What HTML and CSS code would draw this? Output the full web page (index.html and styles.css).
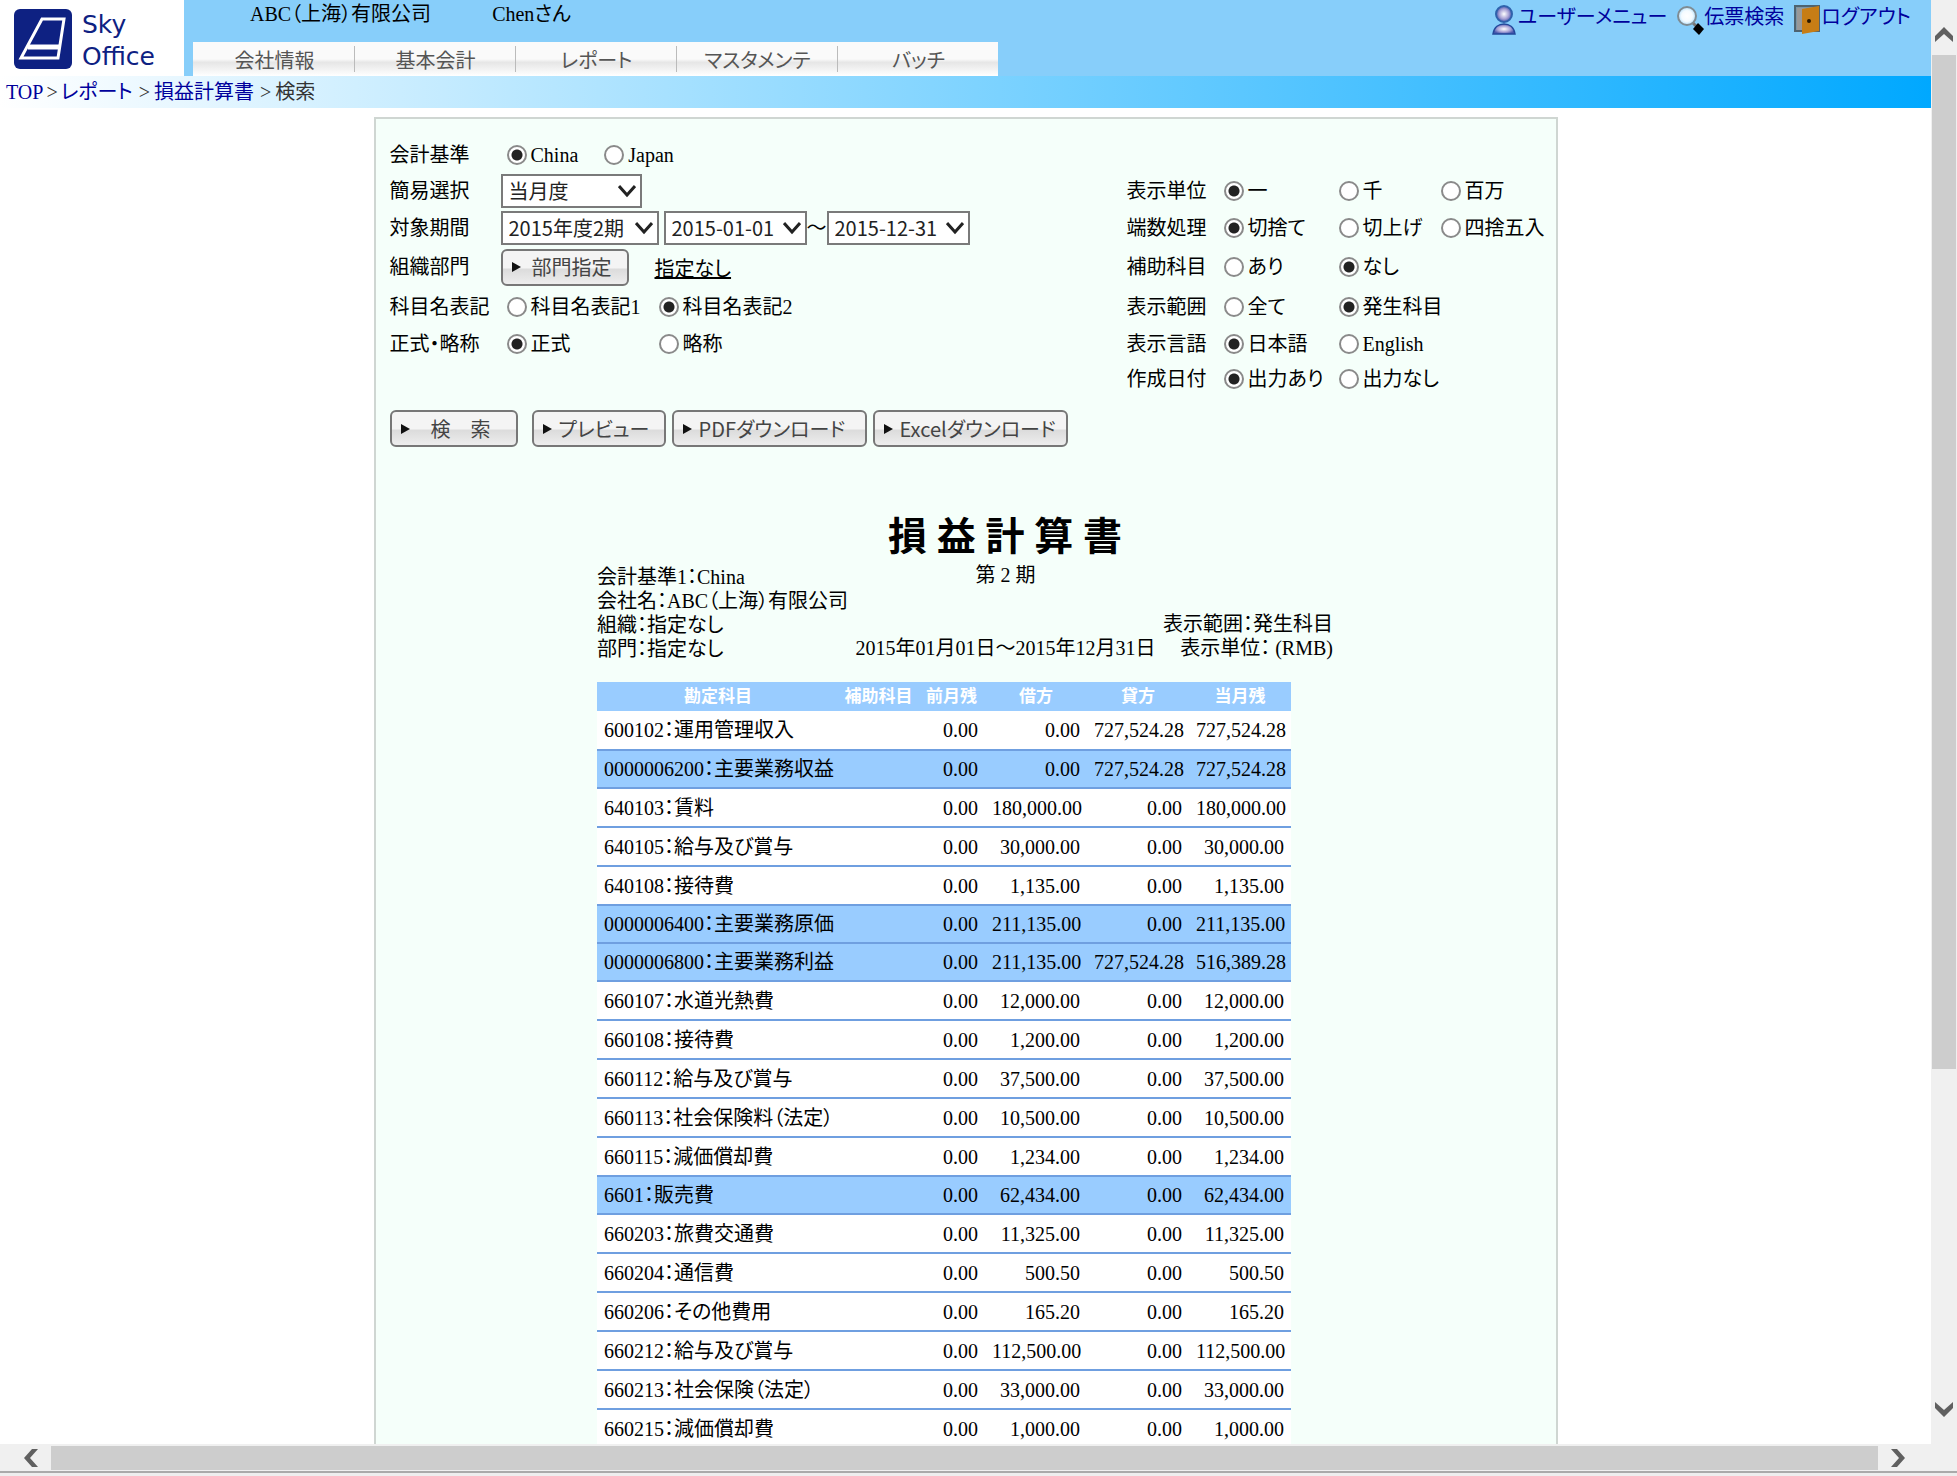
FILE: index.html
```html
<!DOCTYPE html>
<html lang="ja">
<head>
<meta charset="utf-8">
<title>損益計算書</title>
<link rel="stylesheet" href="styles.css">
</head>
<body>
<div class="window">
  <div class="page">
    <header class="header">
      <a class="logo" href="#">
        <svg class="logo-mark" viewBox="0 0 58 60" aria-hidden="true">
          <rect width="58" height="60" rx="6" fill="#0e2182"/>
          <path d="M28 10H50L44 49H7Z" fill="none" stroke="#fff" stroke-width="3"/>
          <path d="M14 38H46" fill="none" stroke="#fff" stroke-width="5"/>
        </svg>
        <span class="logo-text">Sky<br>Office</span>
      </a>
      <div class="header-main">
        <div class="account"><span>ABC（上海）有限公司</span><span>Chenさん</span></div>
        <nav class="tabs">
          <a href="#">会社情報</a>
          <a href="#">基本会計</a>
          <a href="#">レポート</a>
          <a href="#">マスタメンテ</a>
          <a href="#">バッチ</a>
        </nav>
      </div>
      <div class="user-links">
        <a href="#">
          <svg class="icon" viewBox="0 0 26 30" aria-hidden="true">
            <defs>
              <radialGradient id="orb"><stop offset="0" stop-color="#fff"/><stop offset="0.6" stop-color="#a9a3d6"/><stop offset="1" stop-color="#4a58ad"/></radialGradient>
              <radialGradient id="lens"><stop offset="0" stop-color="#fff"/><stop offset="0.6" stop-color="#f4fbff"/><stop offset="1" stop-color="#b5e0fb"/></radialGradient>
            </defs>
            <circle cx="13" cy="9" r="8" fill="url(#orb)" stroke="#2f62ac" stroke-width="2"/>
            <path d="M2 29C3 22 8 19 13 19S23 22 24 29Z" fill="url(#orb)" stroke="#24489a" stroke-width="1.5"/>
          </svg>ユーザーメニュー</a>
        <a href="#">
          <svg class="icon" viewBox="0 0 26 30" aria-hidden="true">
            <path d="M16 18L20 22" stroke="#777" stroke-width="3"/>
            <circle cx="10" cy="11" r="9" fill="url(#lens)" stroke="#7f8c93" stroke-width="2"/>
            <path d="M21 18L27 24L22 30L16 24Z" fill="#000"/>
          </svg>伝票検索</a>
        <a href="#">
          <svg class="icon" viewBox="0 0 26 30" aria-hidden="true">
            <path d="M1 1H25V26H1Z" fill="#7d96a5" stroke="#4e6370" stroke-width="2"/>
            <path d="M3 3H12V25H3Z" fill="#999"/>
            <path d="M8 4L25 1V26L8 29Z" fill="#c77d15"/>
            <circle cx="15" cy="16" r="2" fill="#2a1800"/>
          </svg>ログアウト</a>
      </div>
    </header>
    <nav class="breadcrumb">
      <a href="#">TOP</a><span>&gt;</span><a href="#">レポート</a><span class="wide">&gt;</span><a href="#">損益計算書</a><span class="wide">&gt;</span><span class="here">検索</span>
    </nav>

    <main class="panel">
      <form class="conditions">
        <div class="fields fields-left">
          <span class="name">会計基準</span>
          <div class="options">
            <label><input type="radio" name="standard" checked>China</label>
            <label><input type="radio" name="standard">Japan</label>
          </div>
          <label class="name" for="quick">簡易選択</label>
          <div class="controls"><select id="quick" class="w-quick"><option>当月度</option></select></div>
          <label class="name" for="term">対象期間</label>
          <div class="controls">
            <select id="term" class="w-term"><option>2015年度2期</option></select>
            <select class="w-date" aria-label="開始日"><option>2015-01-01</option></select>
            <span class="tilde">～</span>
            <select class="w-date" aria-label="終了日"><option>2015-12-31</option></select>
          </div>
          <span class="name">組織部門</span>
          <div class="controls dept">
            <button type="button" class="btn w-small">部門指定</button>
            <a class="unset" href="#">指定なし</a>
          </div>
          <span class="name">科目名表記</span>
          <div class="options pair">
            <label><input type="radio" name="notation">科目名表記1</label>
            <label><input type="radio" name="notation" checked>科目名表記2</label>
          </div>
          <span class="name">正式・略称</span>
          <div class="options pair">
            <label><input type="radio" name="form" checked>正式</label>
            <label><input type="radio" name="form">略称</label>
          </div>
        </div>
        <div class="fields fields-right">
          <span class="name">表示単位</span>
          <div class="triple">
            <label><input type="radio" name="unit" checked>一</label>
            <label><input type="radio" name="unit">千</label>
            <label><input type="radio" name="unit">百万</label>
          </div>
          <span class="name">端数処理</span>
          <div class="triple">
            <label><input type="radio" name="round" checked>切捨て</label>
            <label><input type="radio" name="round">切上げ</label>
            <label><input type="radio" name="round">四捨五入</label>
          </div>
          <span class="name">補助科目</span>
          <div class="triple">
            <label><input type="radio" name="sub">あり</label>
            <label><input type="radio" name="sub" checked>なし</label>
          </div>
          <span class="name">表示範囲</span>
          <div class="triple">
            <label><input type="radio" name="range">全て</label>
            <label><input type="radio" name="range" checked>発生科目</label>
          </div>
          <span class="name">表示言語</span>
          <div class="triple">
            <label><input type="radio" name="lang" checked>日本語</label>
            <label><input type="radio" name="lang">English</label>
          </div>
          <span class="name">作成日付</span>
          <div class="triple">
            <label><input type="radio" name="date" checked>出力あり</label>
            <label><input type="radio" name="date">出力なし</label>
          </div>
        </div>
      </form>
      <div class="actions">
        <button type="button" class="btn w-small search">検　索</button>
        <button type="button" class="btn w-preview">プレビュー</button>
        <button type="button" class="btn w-download">PDFダウンロード</button>
        <button type="button" class="btn w-download">Excelダウンロード</button>
      </div>

      <section class="report">
        <h1>損 益 計 算 書</h1>
        <div class="meta">
          <div class="meta-left">
            <div>会計基準1：China</div>
            <div>会社名：ABC（上海）有限公司</div>
            <div>組織：指定なし</div>
            <div>部門：指定なし</div>
          </div>
          <div class="meta-mid">
            <div class="period">第 2 期</div>
            <div>2015年01月01日～2015年12月31日</div>
          </div>
          <div class="meta-right">
            <div>表示範囲：発生科目</div>
            <div>表示単位： (RMB)</div>
          </div>
        </div>
        <table class="ledger">
          <colgroup><col class="c-name"><col class="c-sub"><col class="c-prev"><col class="c-num"><col class="c-num"><col class="c-num"></colgroup>
          <thead><tr><th>勘定科目</th><th>補助科目</th><th>前月残</th><th>借方</th><th>貸方</th><th>当月残</th></tr></thead>
          <tbody>
            <tr><td>600102：運用管理収入</td><td></td><td>0.00</td><td>0.00</td><td>727,524.28</td><td>727,524.28</td></tr>
            <tr class="total"><td>0000006200：主要業務収益</td><td></td><td>0.00</td><td>0.00</td><td>727,524.28</td><td>727,524.28</td></tr>
            <tr><td>640103：賃料</td><td></td><td>0.00</td><td>180,000.00</td><td>0.00</td><td>180,000.00</td></tr>
            <tr><td>640105：給与及び賞与</td><td></td><td>0.00</td><td>30,000.00</td><td>0.00</td><td>30,000.00</td></tr>
            <tr><td>640108：接待費</td><td></td><td>0.00</td><td>1,135.00</td><td>0.00</td><td>1,135.00</td></tr>
            <tr class="total"><td>0000006400：主要業務原価</td><td></td><td>0.00</td><td>211,135.00</td><td>0.00</td><td>211,135.00</td></tr>
            <tr class="total"><td>0000006800：主要業務利益</td><td></td><td>0.00</td><td>211,135.00</td><td>727,524.28</td><td>516,389.28</td></tr>
            <tr><td>660107：水道光熱費</td><td></td><td>0.00</td><td>12,000.00</td><td>0.00</td><td>12,000.00</td></tr>
            <tr><td>660108：接待費</td><td></td><td>0.00</td><td>1,200.00</td><td>0.00</td><td>1,200.00</td></tr>
            <tr><td>660112：給与及び賞与</td><td></td><td>0.00</td><td>37,500.00</td><td>0.00</td><td>37,500.00</td></tr>
            <tr><td>660113：社会保険料（法定）</td><td></td><td>0.00</td><td>10,500.00</td><td>0.00</td><td>10,500.00</td></tr>
            <tr><td>660115：減価償却費</td><td></td><td>0.00</td><td>1,234.00</td><td>0.00</td><td>1,234.00</td></tr>
            <tr class="total"><td>6601：販売費</td><td></td><td>0.00</td><td>62,434.00</td><td>0.00</td><td>62,434.00</td></tr>
            <tr><td>660203：旅費交通費</td><td></td><td>0.00</td><td>11,325.00</td><td>0.00</td><td>11,325.00</td></tr>
            <tr><td>660204：通信費</td><td></td><td>0.00</td><td>500.50</td><td>0.00</td><td>500.50</td></tr>
            <tr><td>660206：その他費用</td><td></td><td>0.00</td><td>165.20</td><td>0.00</td><td>165.20</td></tr>
            <tr><td>660212：給与及び賞与</td><td></td><td>0.00</td><td>112,500.00</td><td>0.00</td><td>112,500.00</td></tr>
            <tr><td>660213：社会保険（法定）</td><td></td><td>0.00</td><td>33,000.00</td><td>0.00</td><td>33,000.00</td></tr>
            <tr><td>660215：減価償却費</td><td></td><td>0.00</td><td>1,000.00</td><td>0.00</td><td>1,000.00</td></tr>
          </tbody>
        </table>
      </section>
    </main>
  </div>
  <div class="vbar">
    <svg class="arrow" viewBox="0 0 18 18"><path d="M0 16L9 8L18 16V10L9 1L0 10Z" fill="#606060"/></svg>
    <div class="vtrack"><div class="vthumb"></div></div>
    <svg class="arrow" viewBox="0 0 18 18"><path d="M0 2L9 10L18 2V8L9 17L0 8Z" fill="#606060"/></svg>
  </div>
  <div class="hbar">
    <svg class="arrow" viewBox="0 0 18 18"><path d="M16 0L8 9L16 18H10L2 9L10 0Z" fill="#606060"/></svg>
    <div class="hthumb"></div>
    <svg class="arrow" viewBox="0 0 18 18"><path d="M2 0L10 9L2 18H8L16 9L8 0Z" fill="#606060"/></svg>
  </div>
  <div class="edge"></div>
</div>
</body>
</html>
```
FILE: styles.css
```css
* { box-sizing: border-box; }

body {
  margin: 0;
  font-family: "Liberation Serif", "Noto Sans CJK JP", serif;
  font-size: 20px;
  line-height: 24px;
  font-feature-settings: "palt";
  color: #000;
  background: #fff;
}

a { color: #00009c; text-decoration: none; }

.window {
  display: grid;
  grid-template-columns: minmax(0, 1fr) 26px;
  grid-template-rows: minmax(0, 1fr) 27px 5px;
  height: 100vh;
}

.page { overflow: hidden; }

/* header */
.header {
  display: flex;
  height: 76px;
  background: #87cefa;
}

.logo {
  display: flex;
  gap: 10px;
  width: 184px;
  padding: 9px 0 0 14px;
  background: #fff;
}

.logo-mark { width: 58px; height: 60px; }

.logo-text {
  font: 25px/32px "DejaVu Sans", sans-serif;
  color: #0e2182;
}

.header-main {
  display: flex;
  flex: 1;
  flex-direction: column;
  justify-content: space-between;
  padding-left: 9px;
}

.account {
  display: flex;
  gap: 61px;
  padding: 2px 0 0 57px;
}

.tabs {
  display: flex;
  align-self: flex-start;
  height: 34px;
  background: linear-gradient(#fafafa 0 50%, #e6e6e6 60%, #fff 100%);
}

.tabs a {
  position: relative;
  width: 161px;
  padding-left: 2px;
  color: #555;
  text-align: center;
  line-height: 38px;
}

.tabs a + a::before {
  content: "";
  position: absolute;
  left: 0;
  top: 4px;
  width: 1px;
  height: 26px;
  background: #bbb;
}

.user-links {
  display: flex;
  gap: 10px;
  padding: 5px 20px 0 0;
}

.user-links a { display: flex; gap: 1px; }

.icon { width: 26px; height: 30px; overflow: visible; }

.breadcrumb {
  display: flex;
  gap: 3px;
  height: 32px;
  padding: 4px 6px;
  color: #333;
  background: linear-gradient(to right, #fff, #00a8ff);
}

.breadcrumb .wide { padding: 0 1px 0 3px; }

/* panel */
.panel {
  width: 1184px;
  max-width: 100%;
  margin: 9px auto 0;
  padding: 18px 15px 18px 14px;
  border: 2px solid #cfd6d2;
  background: #f5fffa;
}

.conditions {
  display: flex;
  justify-content: space-between;
}

.fields {
  display: grid;
  align-content: start;
  align-items: center;
}

.fields-left {
  grid-template-columns: 111px auto;
  grid-template-rows: 36px 36px 37px 42px 38px 35px 35px;
}

.fields-right {
  grid-template-columns: 97px auto;
  grid-template-rows: 36px 37px 42px 38px 35px 35px;
  padding-top: 36px;
}

.fields label { white-space: nowrap; }

.options { display: flex; gap: 26px; padding-left: 6px; }

.pair {
  display: grid;
  grid-template-columns: 152px auto;
  gap: 0;
}

.triple {
  display: grid;
  grid-template-columns: 115px 102px 100px;
}

.options label,
.triple label { display: flex; align-items: center; gap: 4px; }

input[type="radio"] {
  appearance: none;
  flex: none;
  width: 20px;
  height: 20px;
  margin: 0;
  border: 2px solid #8a8a8a;
  border-radius: 50%;
  background: #fff;
}

input[type="radio"]:checked { background: radial-gradient(circle, #222 0 5px, #fff 6px); }

.controls { display: flex; align-items: center; gap: 5px; }

select {
  appearance: none;
  height: 34px;
  padding: 0 6px;
  border: 2px solid #7a7a7a;
  border-radius: 0;
  font: 20px/28px "Noto Sans CJK JP", sans-serif;
  color: #222;
  background: #fff url("data:image/svg+xml,%3Csvg xmlns='http://www.w3.org/2000/svg' width='18' height='14'%3E%3Cpath d='M1 2L9 11L17 2' fill='none' stroke='%23222' stroke-width='3'/%3E%3C/svg%3E") no-repeat right 4px center;
}

.w-quick { width: 141px; }
.w-term { width: 158px; }
.w-date { width: 143px; }
.tilde { width: 20px; margin: 0 -5px; text-align: center; }

.dept { gap: 26px; }
.unset { padding-top: 4px; color: #000; text-decoration: underline; }

.btn {
  display: flex;
  align-items: center;
  gap: 7px;
  height: 37px;
  padding: 0 9px;
  border: 2px solid #777;
  border-radius: 6px;
  font: 20px/24px "Noto Sans CJK JP", sans-serif;
  font-feature-settings: "palt";
  color: #444;
  white-space: nowrap;
  background: linear-gradient(#f4f4f4 0 50%, #dcdcdc 56%, #ededed);
}

.btn::before {
  content: "";
  border: solid transparent;
  border-width: 5px 0 5px 9px;
  border-left-color: #111;
}

.w-small { gap: 11px; width: 128px; }
.w-preview { width: 134px; margin-left: 8px; }
.w-download { width: 195px; }
.search { gap: 21px; }

.actions { display: flex; gap: 6px; margin-top: 14px; }

/* report */
.report {
  width: 736px;
  margin: 64px auto 0;
}

h1 {
  margin: 0 0 0 80px;
  font-size: 39px;
  line-height: 52px;
  text-align: center;
}

.meta {
  display: flex;
  justify-content: space-between;
  height: 97px;
}

.meta-left { padding-top: 2px; }
.meta-mid { display: flex; flex-direction: column; justify-content: space-between; text-align: center; }
.meta-right { align-self: flex-end; text-align: right; }

.ledger {
  width: 694px;
  margin-top: 22px;
  border-collapse: collapse;
  table-layout: fixed;
}

.c-name { width: 242px; }
.c-sub { width: 79px; }
.c-prev { width: 67px; }
.c-num { width: 102px; }

.ledger th {
  height: 29px;
  padding: 0;
  font-size: 17px;
  color: #fff;
  background: #99ccff;
}

.ledger td {
  height: 39px;
  padding: 0 7px;
  border-bottom: 2px solid #6f9fe0;
  text-align: right;
  white-space: nowrap;
  background: #fff;
}

.ledger td:first-child { text-align: left; }
.ledger .total td { height: 38px; background: #99ccff; }

/* scroll bars */
.vbar {
  display: flex;
  flex-direction: column;
  align-items: center;
  gap: 11px;
  padding: 26px 1px;
  background: #f0f0f0;
}

.vtrack { flex: 1; align-self: stretch; }
.vthumb { height: 76%; background: #cdcdcd; }

.arrow { flex: none; width: 18px; height: 18px; }

.hbar {
  display: flex;
  grid-column: 1 / -1;
  align-items: center;
  gap: 11px;
  padding: 1px 50px 1px 22px;
  background: #f0f0f0;
}

.hthumb { flex: 1; height: 24px; background: #cdcdcd; }

.edge {
  grid-column: 1 / -1;
  border-top: 2px solid #aaa;
  background: #eee;
}
```
